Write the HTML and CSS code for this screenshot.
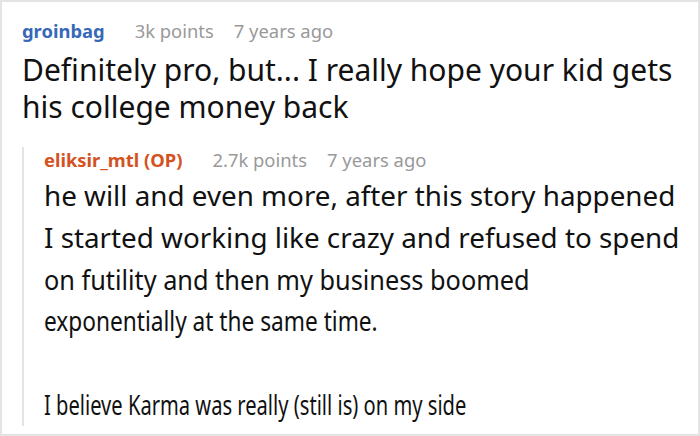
FILE: index.html
```html
<!DOCTYPE html>
<html>
<head>
<meta charset="utf-8">
<link rel="stylesheet" href="styles.css">
</head>
<body>
<div class="frame">
  <div class="comment">
    <div class="meta">
      <span class="author">groinbag</span>
      <span class="points">3k points</span>
      <span class="time">7 years ago</span>
    </div>
    <p class="body first">Definitely pro, but... I really hope your kid gets his college money back</p>
    <div class="reply">
      <div class="meta">
        <span class="author op">eliksir_mtl (OP)</span>
        <span class="points">2.7k points</span>
        <span class="time">7 years ago</span>
      </div>
      <p class="body">
        <span class="line">he will and even more, after this story happened</span>
        <span class="line">I started working like crazy and refused to spend</span>
        <span class="line"><span class="squeeze s3">on futility and then my business boomed</span></span>
        <span class="line"><span class="squeeze s4">exponentially at the same time.</span></span>
      </p>
      <p class="body gap"><span class="line"><span class="squeeze s6">I believe Karma was really (still is) on my side</span></span></p>
    </div>
  </div>
</div>
</body>
</html>
```
FILE: styles.css
```css
html, body {
  margin: 0;
  padding: 0;
  background: #fff;
}
.frame {
  width: 700px;
  height: 436px;
  box-sizing: border-box;
  border: 2px solid #e4e4e4;
  overflow: hidden;
  font-family: "Noto Sans", "Open Sans", sans-serif;
  color: #111;
}
.comment {
  padding: 16px 10px 0 20px;
}
.meta {
  font-size: 18.4px;
  line-height: 26px;
  display: flex;
  white-space: nowrap;
}
.author {
  font-weight: bold;
  color: #3868b8;
  margin-right: 30px;
}
.author.op {
  color: #d4521f;
}
.points {
  color: #999;
  margin-right: 20px;
}
.time {
  color: #999;
}
.body {
  margin: 0;
  font-size: 30px;
  line-height: 37px;
}
.first {
  margin-top: 7px;
}
.reply {
  margin-top: 22px;
  border-left: 2px solid #e4e4e4;
  padding-left: 20px;
}
.reply .body {
  font-size: 27.8px;
  line-height: 41.8px;
  white-space: nowrap;
}
.reply .meta + .body {
  margin-top: 2px;
}
.line {
  display: block;
}
.squeeze {
  display: inline-block;
  transform-origin: 0 50%;
}
.s3 {
  transform: scaleX(0.91);
}
.s4 {
  transform: scaleX(0.815);
}
.s6 {
  transform: scaleX(0.724);
}
.reply .gap {
  margin-top: 41.8px;
}
```
